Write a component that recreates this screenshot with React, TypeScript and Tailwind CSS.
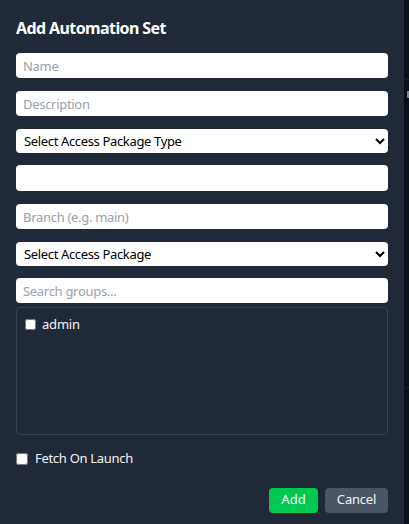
import { useState } from 'react'

const FONT = { fontFamily: '"Noto Sans", "Open Sans", sans-serif' }

export default function App() {
  const [fetchOnLaunch, setFetchOnLaunch] = useState(false)
  const [admin, setAdmin] = useState(false)

  return (
    <div className="flex h-[524px] w-[409px] overflow-hidden bg-[#0b0f17]" style={FONT}>
      {/* 弹窗 */}
      <div className="flex h-full w-[404px] shrink-0 flex-col bg-[#1f2937] px-4 pt-4">
        <h2 className="h-6 text-[16px] font-bold leading-6 tracking-[-0.6px] text-white">Add Automation Set</h2>

        <input
          placeholder="Name"
          className="mt-[13px] h-[25px] w-[372px] rounded bg-white px-[7px] text-[13px] tracking-[-0.3px] text-gray-800 placeholder-gray-400 outline-none"
        />
        <input
          placeholder="Description"
          className="mt-[13px] h-[25px] w-[372px] rounded bg-white px-[7px] text-[13px] tracking-[-0.3px] text-gray-800 placeholder-gray-400 outline-none"
        />
        <select className="mt-[13px] h-[24px] w-[372px] rounded bg-white px-1 text-[13px] tracking-[-0.35px] text-black outline-none">
          <option>Select Access Package Type</option>
        </select>
        <input className="mt-[12px] h-[26px] w-[372px] rounded bg-white px-[7px] text-[13px] text-gray-800 outline-none" />
        <input
          placeholder="Branch (e.g. main)"
          className="mt-[13px] h-[25px] w-[372px] rounded bg-white px-[7px] text-[13px] tracking-[-0.3px] text-gray-800 placeholder-gray-400 outline-none"
        />
        <select className="mt-[13px] h-[24px] w-[372px] rounded bg-white px-1 text-[13px] tracking-[-0.35px] text-black outline-none">
          <option>Select Access Package</option>
        </select>
        <input
          placeholder="Search groups..."
          className="mt-[12px] h-[25px] w-[372px] rounded bg-white px-[7px] text-[13px] tracking-[-0.3px] text-gray-800 placeholder-gray-400 outline-none"
        />

        {/* 分组列表 */}
        <div className="mt-[4px] h-[128px] w-[372px] rounded border border-gray-700 px-2 pt-[7px]">
          <label className="flex items-center gap-[6px] text-[13px] tracking-[-0.2px] text-gray-100">
            <input
              type="checkbox"
              checked={admin}
              onChange={(e) => setAdmin(e.target.checked)}
              className="h-[11px] w-[11px]"
            />
            admin
          </label>
        </div>

        <label className="mt-[14px] flex items-center gap-[7px] text-[13px] tracking-[-0.3px] text-gray-100">
          <input
            type="checkbox"
            checked={fetchOnLaunch}
            onChange={(e) => setFetchOnLaunch(e.target.checked)}
            className="h-[12px] w-[12px]"
          />
          Fetch On Launch
        </label>

        <div className="mt-[19px] flex w-[372px] justify-end gap-[7px]">
          <button className="h-[25px] w-[49px] rounded bg-green-500 text-[13px] text-white">Add</button>
          <button className="h-[25px] w-[63px] rounded bg-gray-600 text-[13px] tracking-[-0.2px] text-gray-100">
            Cancel
          </button>
        </div>
      </div>

      {/* 背景滚动条 */}
      <div className="flex flex-1 flex-col">
        <div className="h-[79px]" />
        <div className="h-[309px] border-y border-[#161b24]">
          <div className="ml-auto mt-[11px] h-[7px] w-[2px] bg-[#7b8790]" />
        </div>
      </div>
    </div>
  )
}
